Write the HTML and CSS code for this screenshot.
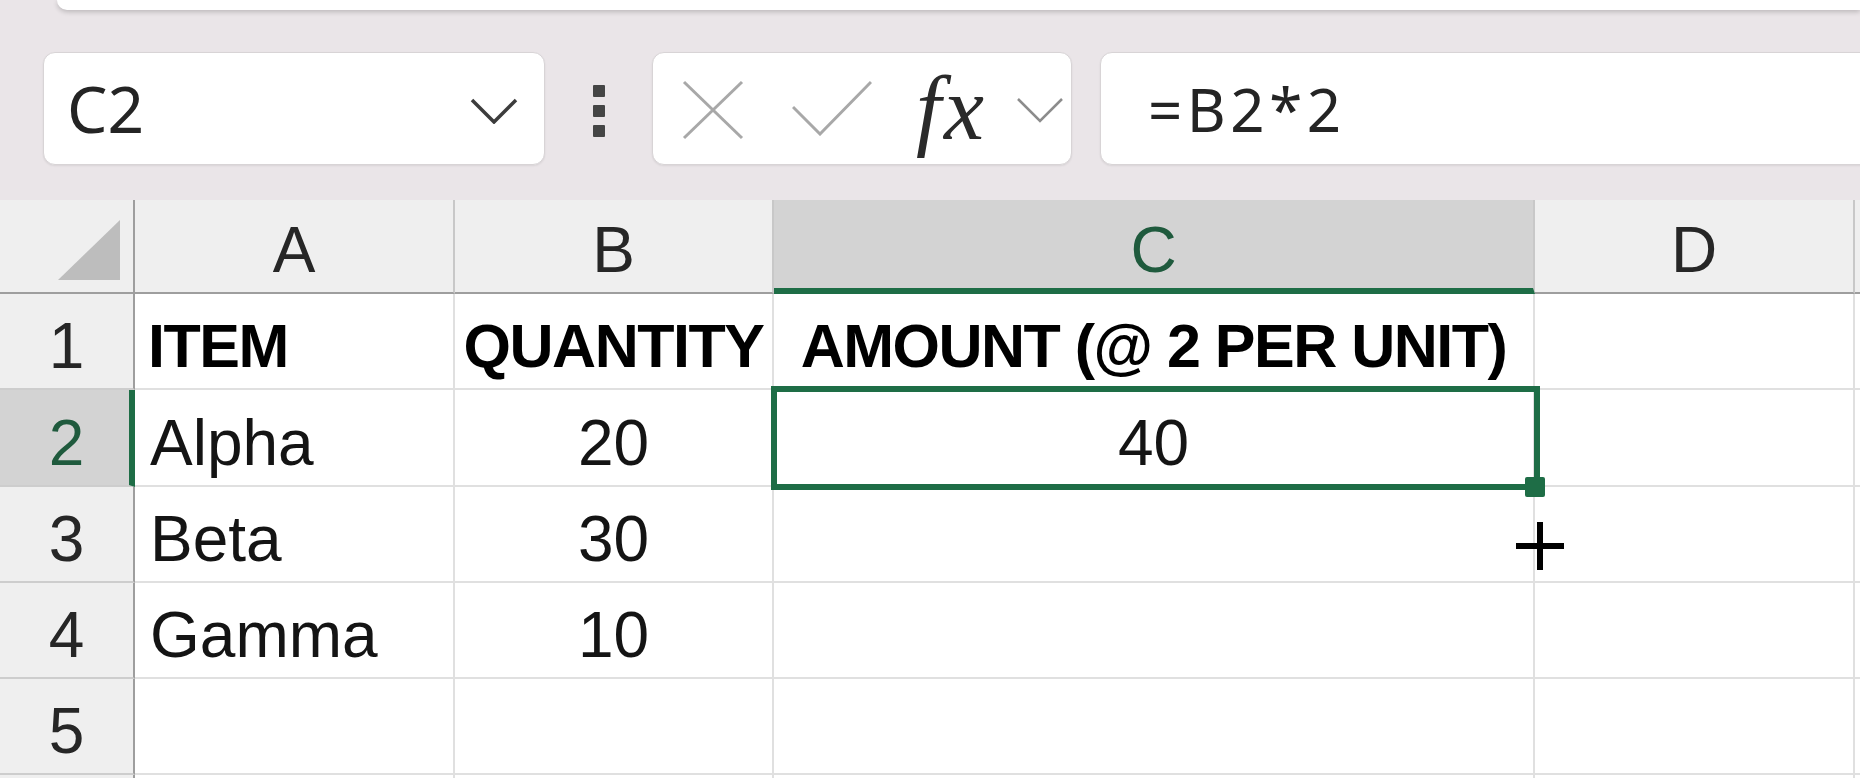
FILE: index.html
```html
<!DOCTYPE html>
<html lang="en">
<head>
    <meta charset="UTF-8">
    <title>Sheet</title>
    <link rel="stylesheet" href="styles.css">
</head>
<body>

<div class="toolbar">
    <div class="ribbon-edge"></div>
    <div class="formula-row">
        <div class="name-box">
            <span class="name-text">C2</span>
            <svg class="chev" viewBox="0 0 48 26"><polyline points="2,2 24,24 46,2"/></svg>
        </div>
        <div class="grip"><span></span><span></span><span></span></div>
        <div class="fx-box">
            <svg class="icon-cancel" viewBox="0 0 62 60"><line x1="2" y1="2" x2="60" y2="58"/><line x1="60" y1="2" x2="2" y2="58"/></svg>
            <svg class="icon-enter" viewBox="0 0 80 56"><polyline points="1,27 28,54 79,2"/></svg>
            <span class="fx">fx</span>
            <svg class="chev-small" viewBox="0 0 48 26"><polyline points="2,2 24,24 46,2"/></svg>
        </div>
        <div class="formula-box"><span class="formula">=B2*2</span></div>
    </div>
</div>

<div class="sheet">
    <div class="grid">
        <!-- header row -->
        <div class="corner"><span class="corner-mark"></span></div>
        <div class="col-head">A</div>
        <div class="col-head">B</div>
        <div class="col-head active">C</div>
        <div class="col-head">D</div>
        <div class="col-head"></div>

        <!-- row 1 -->
        <div class="row-head">1</div>
        <div class="cell bold">ITEM</div>
        <div class="cell bold center">QUANTITY</div>
        <div class="cell bold center">AMOUNT (@ 2 PER UNIT)</div>
        <div class="cell"></div>
        <div class="cell"></div>

        <!-- row 2 -->
        <div class="row-head active">2</div>
        <div class="cell">Alpha</div>
        <div class="cell center">20</div>
        <div class="cell center">40</div>
        <div class="cell"></div>
        <div class="cell"></div>

        <!-- row 3 -->
        <div class="row-head">3</div>
        <div class="cell">Beta</div>
        <div class="cell center">30</div>
        <div class="cell"></div>
        <div class="cell"></div>
        <div class="cell"></div>

        <!-- row 4 -->
        <div class="row-head">4</div>
        <div class="cell">Gamma</div>
        <div class="cell center">10</div>
        <div class="cell"></div>
        <div class="cell"></div>
        <div class="cell"></div>

        <!-- row 5 -->
        <div class="row-head">5</div>
        <div class="cell"></div>
        <div class="cell"></div>
        <div class="cell"></div>
        <div class="cell"></div>
        <div class="cell"></div>

        <!-- row 6, only its top edge shows -->
        <div class="row-head"></div>
        <div class="cell"></div>
        <div class="cell"></div>
        <div class="cell"></div>
        <div class="cell"></div>
        <div class="cell"></div>
    </div>

    <div class="selection"><span class="fill-handle"></span></div>

    <svg class="cursor-plus" viewBox="0 0 48 48">
        <rect x="21" y="0" width="6" height="48"/>
        <rect x="0" y="21" width="48" height="6"/>
    </svg>
</div>

</body>
</html>
```

FILE: styles.css
```css
body {
    margin: 0;
    width: 1860px;
    height: 778px;
    overflow: hidden;
    background-color: #eae5e8;
    font-family: "Liberation Sans", Arial, sans-serif;
    color: #1a1a1a;
}

/* formula bar area */
.toolbar {
    height: 200px;
    display: flex;
    flex-direction: column;
}

.ribbon-edge {
    height: 10px;
    margin-left: 57px;
    background-color: #fff;
    border-bottom-left-radius: 12px;
    box-shadow: 0 2px 5px rgba(0, 0, 0, 0.2);
}

.formula-row {
    display: flex;
    height: 113px;
    margin-top: 42px;
    padding-left: 43px;
}

.name-box,
.fx-box,
.formula-box {
    box-sizing: border-box;
    height: 113px;
    background-color: #fff;
    border: 1px solid #d8d4d6;
    border-radius: 12px;
    box-shadow: 0 1px 2px rgba(0, 0, 0, 0.08);
    display: flex;
    align-items: center;
}

.name-box {
    width: 502px;
    justify-content: space-between;
    padding: 0 26px 0 23px;
}

.name-text {
    font-family: "Noto Sans", sans-serif;
    font-size: 64px;
    line-height: 1;
    color: #242424;
}

.chev {
    width: 48px;
    height: 26px;
    margin-top: 4px;
}

.chev polyline {
    fill: none;
    stroke: #3c3c3c;
    stroke-width: 3.5;
}

.grip {
    display: flex;
    flex-direction: column;
    gap: 8px;
    align-self: center;
    margin: 4px 0 0 48px;
}

.grip span {
    display: block;
    width: 12px;
    height: 12px;
    background-color: #454545;
    border-radius: 1px;
}

.fx-box {
    width: 420px;
    margin-left: 47px;
    padding-left: 29px;
}

.icon-cancel {
    width: 62px;
    height: 60px;
    margin-top: 2px;
}

.icon-enter {
    width: 80px;
    height: 56px;
    margin-left: 48px;
    margin-top: -2px;
}

.icon-cancel line,
.icon-enter polyline {
    fill: none;
    stroke: #a8a8a8;
    stroke-width: 3;
}

.fx {
    display: inline-block;
    width: 76px;
    margin-left: 44px;
    font-family: "Liberation Serif", "Times New Roman", serif;
    font-style: italic;
    font-size: 90px;
    line-height: 1;
    letter-spacing: 3px;
    color: #2a2a2a;
}

.chev-small {
    width: 48px;
    height: 26px;
    margin-left: 24px;
    margin-top: 2px;
}

.chev-small polyline {
    fill: none;
    stroke: #8c8c8c;
    stroke-width: 2.5;
}

.formula-box {
    flex: 1;
    margin-left: 28px;
    margin-right: -30px;
    padding-left: 47px;
}

.formula {
    font-family: "Noto Sans", sans-serif;
    font-size: 60px;
    line-height: 1;
    letter-spacing: 4.5px;
    color: #242424;
}

/* grid */
.sheet {
    position: relative;
    background-color: #fff;
    height: 578px;
}

.grid {
    display: grid;
    grid-template-columns: 135px 320px 319px 761px 320px 1fr;
    grid-template-rows: 94px 96px 97px 96px 96px 96px 96px;
}

.grid > div {
    box-sizing: border-box;
    display: flex;
    align-items: flex-end;
    padding-bottom: 10px;
    font-size: 64px;
    line-height: 1;
    white-space: nowrap;
    overflow: hidden;
}

.corner {
    background-color: #efefef;
    border-right: 2px solid #9e9e9e;
    border-bottom: 2px solid #9e9e9e;
    justify-content: flex-end;
    padding-right: 13px;
}

.grid > .corner {
    padding-bottom: 12px;
}

.corner-mark {
    display: block;
    width: 62px;
    height: 60px;
    background-color: #bdbdbd;
    clip-path: polygon(100% 0, 100% 100%, 0 100%);
}

.col-head {
    background-color: #efefef;
    border-right: 2px solid #c8c8c8;
    border-bottom: 2px solid #9e9e9e;
    justify-content: center;
    font-size: 65px;
    color: #262626;
}

.col-head.active {
    background-color: #d3d3d3;
    border-bottom: 6px solid #1e6d46;
    color: #1f5a3d;
}

.grid > .col-head.active {
    padding-bottom: 6px;
}

.row-head {
    background-color: #efefef;
    border-right: 2px solid #9e9e9e;
    border-bottom: 2px solid #cdcdcd;
    justify-content: center;
    color: #262626;
}

.row-head.active {
    background-color: #d3d3d3;
    border-right: 6px solid #1e6d46;
    color: #1f5a3d;
    padding-left: 4px;
}

.cell {
    background-color: #fff;
    border-right: 2px solid #e0e0e0;
    border-bottom: 2px solid #e0e0e0;
    padding-left: 15px;
    color: #141414;
}

.cell.center {
    justify-content: center;
    padding-left: 0;
}

.grid > .cell.bold {
    font-size: 61px;
    font-weight: bold;
    letter-spacing: -1.5px;
    color: #000;
    padding-left: 13px;
    padding-bottom: 11px;
}

.grid > .cell.bold.center {
    padding-left: 0;
}

/* selected cell C2 */
.selection {
    position: absolute;
    left: 771px;
    top: 186px;
    width: 769px;
    height: 104px;
    box-sizing: border-box;
    border: 6px solid #1e6d46;
}

.fill-handle {
    position: absolute;
    right: -11px;
    bottom: -13px;
    width: 20px;
    height: 20px;
    background-color: #1e6d46;
    border-radius: 2px;
}

.cursor-plus {
    position: absolute;
    left: 1516px;
    top: 322px;
    width: 48px;
    height: 48px;
    fill: #000;
}
```
